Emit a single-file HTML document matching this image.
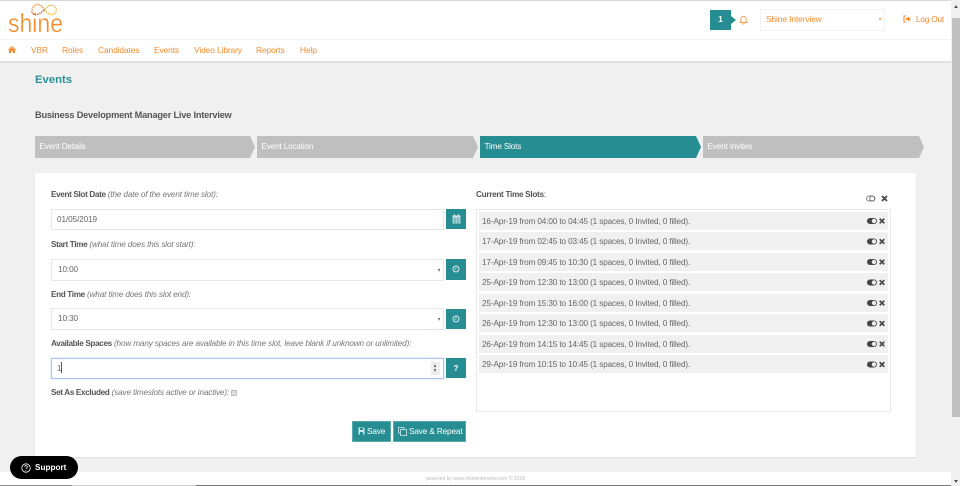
<!DOCTYPE html>
<html><head><meta charset="utf-8"><style>
html,body{margin:0;padding:0}
body{width:960px;height:486px;overflow:hidden;position:relative;background:#f0f0f0;font-family:"Liberation Sans",sans-serif;color:#666}
.a{position:absolute;white-space:nowrap}
.nav{top:45px;font-size:8.4px;letter-spacing:-.1px;line-height:11px;color:#f58a2c}
.step{top:136px;height:22px}
.step span{position:absolute;left:4.500px;top:0;line-height:22px;font-size:8.2px;letter-spacing:-.17px;color:#fff}
.lab{font-size:8.2px;letter-spacing:-.15px;line-height:11px;color:#777;font-style:italic}
.lab b{font-style:normal;color:#555;letter-spacing:-.36px}
.inp{left:51px;width:393px;background:#fff;border:1px solid #e6e6e6;box-sizing:border-box;font-size:8.2px;letter-spacing:-.1px;color:#666}
.tb{left:446px;width:20px;background:#268e93}
.row{left:479px;width:409px;height:18px;background:#f0f0f0;font-size:8.2px;letter-spacing:-.13px;line-height:18px;color:#666}
.row span{position:absolute;left:3px;top:.5px}
.btn{top:421px;height:21px;background:#268e93;color:#fff;font-size:8.2px;letter-spacing:-.12px;line-height:20px;box-sizing:border-box;border:1px solid #5aa9ad}
svg{position:absolute;overflow:visible}
</style></head><body>

<!-- top bar -->
<div class="a" style="left:0;top:0;width:951px;height:62px;background:#fff"></div>
<div class="a" style="left:0;top:0;width:960px;height:1px;background:#d8d8d8"></div>
<div class="a" style="left:0;top:39px;width:951px;height:1px;background:#f2f2f2"></div>
<div class="a" style="left:0;top:61px;width:951px;height:2px;background:#e2e2e2"></div>

<!-- logo -->
<svg style="left:0;top:0" width="80" height="40">
<text x="8" y="32" font-family="Liberation Sans" font-size="26" fill="#f58a2c" stroke="#fff" stroke-width=".35" textLength="55" lengthAdjust="spacingAndGlyphs">shine</text>
<g fill="none" stroke-width="1.500" stroke-dasharray="1.300 1">
<path d="M44 10c-3 3-6 5-9 4.500-2-.3-3.500-2-3-4" stroke="#d9503a"/>
<path d="M32 10c.5-3 3-5.500 6-5.500 3 0 4.500 3 6.500 5.500" stroke="#ef8a3a"/>
<path d="M44.500 10c2 2.500 5 5 8 4.500 3-.5 4.500-3.500 3.500-6-1-2.500-4-4-6.500-3-2 .8-3.500 2.500-5 4.500" stroke="#f4b33a"/>
</g></svg>

<!-- nav -->
<svg style="left:8px;top:46px" width="8" height="7" viewBox="0 0 8 7"><path d="M4 0 0 3.400l.5.600L4 1l3.500 3 .5-.6zM1 4v3h2.200V5h1.600v2H7V4L4 1.500z" fill="#f58a2c"/></svg>
<div class="a nav" style="left:31px">VBR</div>
<div class="a nav" style="left:62px">Roles</div>
<div class="a nav" style="left:98px">Candidates</div>
<div class="a nav" style="left:154px">Events</div>
<div class="a nav" style="left:194px">Video Library</div>
<div class="a nav" style="left:256px">Reports</div>
<div class="a nav" style="left:300px">Help</div>

<!-- top right -->
<div class="a" style="left:710px;top:10px;width:21px;height:20px;background:#268e93;color:#fff;font-size:8.200px;font-weight:bold;line-height:20px;text-align:center">1</div>
<div class="a" style="left:731px;top:16px;border-left:5px solid #268e93;border-top:4px solid transparent;border-bottom:4px solid transparent"></div>
<svg style="left:739px;top:15px" width="9" height="10" viewBox="0 0 9 10"><path d="M1 7.500c1-1 1-2 1-3.500C2 2.500 3 1.200 4.500 1.200S7 2.500 7 4c0 1.500 0 2.500 1 3.500zM3.500 8.500c.3.800 1.700.8 2 0" fill="none" stroke="#f58a2c" stroke-width=".8"/></svg>
<div class="a" style="left:760px;top:9px;width:125px;height:22px;border:1px solid #f2f2f2;box-sizing:border-box;background:#fff"></div>
<div class="a" style="left:766px;top:14px;font-size:8.400px;letter-spacing:-.1px;line-height:11px;color:#f58a2c">Shine Interview</div>
<div class="a" style="left:879px;top:18px;border-top:3px solid #f58a2c;border-left:1.500px solid transparent;border-right:1.500px solid transparent"></div>
<svg style="left:903px;top:15px" width="8" height="8" viewBox="0 0 8 8"><path d="M3 1H1v6h2" fill="none" stroke="#f58a2c"/><path d="M3 3h2V1.500L8 4 5 6.500V5H3z" fill="#f58a2c"/></svg>
<div class="a" style="left:916px;top:13.500px;font-size:8.200px;letter-spacing:-.17px;line-height:11px;color:#f58a2c">Log Out</div>

<!-- headings -->
<div class="a" style="left:35px;top:73px;font-size:11.300px;line-height:14px;font-weight:bold;color:#2d8f94">Events</div>
<div class="a" style="left:35px;top:109px;font-size:9.200px;letter-spacing:-.19px;line-height:12px;font-weight:bold;color:#555">Business Development Manager Live Interview</div>

<!-- steps -->
<div class="a step" style="left:35px;width:220px;background:#bfbfbf;clip-path:polygon(0 0,215px 0,220px 11px,215px 100%,0 100%)"><span>Event Details</span></div>
<div class="a step" style="left:257px;width:221px;background:#bfbfbf;clip-path:polygon(0 0,216px 0,221px 11px,216px 100%,0 100%)"><span>Event Location</span></div>
<div class="a step" style="left:480px;width:221px;background:#268e93;clip-path:polygon(0 0,216px 0,221px 11px,216px 100%,0 100%)"><span>Time Slots</span></div>
<div class="a step" style="left:703px;width:221px;background:#bfbfbf;clip-path:polygon(0 0,216px 0,221px 11px,216px 100%,0 100%)"><span>Event Invites</span></div>

<!-- card -->
<div class="a" style="left:35px;top:173px;width:881px;height:284px;background:#fff;box-shadow:0 1px 1px #ddd"></div>

<div class="a lab" style="left:51px;top:189px"><b>Event Slot Date</b> (the date of the event time slot):</div>
<div class="a inp" style="top:209px;height:21px;line-height:19px;padding-left:5px">01/05/2019</div>
<div class="a tb" style="top:209px;height:20px"></div>
<svg style="left:452px;top:214px" width="9" height="10" viewBox="0 0 9 10"><path d="M.5 1.500h8V9.500h-8z" fill="#cfe6e7"/><path d="M.5 4h8M.5 6h8M.5 8h8M3 4v5.500M6 4v5.500" stroke="#268e93" stroke-width=".6"/><path d="M2.500.5v1.500M6.500.5v1.500" stroke="#fff"/></svg>

<div class="a lab" style="left:51px;top:239px"><b>Start Time</b> (what time does this slot start):</div>
<div class="a inp" style="top:259px;height:22px;line-height:20px;padding-left:6px">10:00</div>
<div class="a" style="left:438px;top:269px;border-top:3px solid #555;border-left:1.500px solid transparent;border-right:1.500px solid transparent"></div>
<div class="a tb" style="top:259px;height:21px"></div>
<svg style="left:452px;top:265px" width="8" height="8" viewBox="0 0 8 8"><circle cx="4" cy="4" r="3" fill="none" stroke="#e4f0f0" stroke-width="1"/><path d="M4 2.300V4.200H2.500" fill="none" stroke="#e4f0f0" stroke-width=".7"/></svg>

<div class="a lab" style="left:51px;top:289px"><b>End Time</b> (what time does this slot end):</div>
<div class="a inp" style="top:308px;height:22px;line-height:20px;padding-left:6px">10:30</div>
<div class="a" style="left:438px;top:318px;border-top:3px solid #555;border-left:1.500px solid transparent;border-right:1.500px solid transparent"></div>
<div class="a tb" style="top:309px;height:20px"></div>
<svg style="left:452px;top:315px" width="8" height="8" viewBox="0 0 8 8"><circle cx="4" cy="4" r="3" fill="none" stroke="#e4f0f0" stroke-width="1"/><path d="M4 2.300V4.200H2.500" fill="none" stroke="#e4f0f0" stroke-width=".7"/></svg>

<div class="a lab" style="left:51px;top:338px"><b>Available Spaces</b> (how many spaces are available in this time slot, leave blank if unknown or unlimited):</div>
<div class="a inp" style="top:358px;height:21px;line-height:19px;padding-left:5px;border-color:#a9c4ee;box-shadow:0 0 2px #c6d8f5">1<span style="display:inline-block;width:1px;height:11px;background:#555;vertical-align:-2px"></span></div>
<div class="a" style="left:431px;top:362px;width:9px;height:13px;background:#eee"></div>
<div class="a" style="left:434px;top:364px;border-bottom:3px solid #444;border-left:1.500px solid transparent;border-right:1.500px solid transparent"></div>
<div class="a" style="left:434px;top:369px;border-top:3px solid #444;border-left:1.500px solid transparent;border-right:1.500px solid transparent"></div>
<div class="a tb" style="top:358px;height:20px;color:#fff;font-size:8px;font-weight:bold;line-height:21px;text-align:center">?</div>

<div class="a lab" style="left:51px;top:387px"><b>Set As Excluded</b> (save timeslots active or inactive):</div>
<div class="a" style="left:231px;top:390px;width:6px;height:6px;box-sizing:border-box;background:#ddd;border:.5px solid #bbb;border-radius:1px"></div>

<div class="a btn" style="left:352px;width:39px;padding-left:14px">Save</div>
<svg style="left:358px;top:427px" width="7" height="8" viewBox="0 0 7 8"><path d="M.5 .5h5l1 1v6h-6z" fill="#cfe6e7"/><path d="M2 1v2h3V1M2 5h3v2.500H2z" fill="#268e93"/></svg>
<div class="a btn" style="left:393px;width:73px;padding-left:15px">Save &amp; Repeat</div>
<svg style="left:398px;top:427px" width="9" height="9" viewBox="0 0 9 9"><path d="M.5 .5h5.500v5.500H.5z" fill="none" stroke="#d6eaeb" stroke-width=".8"/><path d="M2.500 2.500H8.500V8.500H2.500z" fill="#268e93" stroke="#d6eaeb" stroke-width=".8"/></svg>

<!-- right column -->
<div class="a" style="left:476px;top:189px;font-size:8.200px;letter-spacing:-.3px;line-height:11px;color:#555"><b>Current Time Slots</b>:</div>
<svg style="left:866px;top:195px" width="10" height="7" viewBox="0 0 10 7"><rect x=".5" y="1" width="8.500" height="5" rx="2.500" fill="none" stroke="#555" stroke-width=".7"/><circle cx="6.300" cy="3.500" r="2.500" fill="none" stroke="#555" stroke-width=".7"/></svg>
<svg style="left:881px;top:195px" width="7" height="7" viewBox="0 0 7 7"><path d="M1 1l5 5M6 1l-5 5" stroke="#444" stroke-width="1.700"/></svg>
<div class="a" style="left:476px;top:209px;width:415px;height:203px;border:1px solid #e8e8e8;box-sizing:border-box;background:#fff"></div>

<div class="a row" style="top:212px"><span>16-Apr-19 from 04:00 to 04:45 (1 spaces, 0 Invited, 0 filled).</span></div>
<div class="a row" style="top:232px"><span>17-Apr-19 from 02:45 to 03:45 (1 spaces, 0 Invited, 0 filled).</span></div>
<div class="a row" style="top:253px"><span>17-Apr-19 from 09:45 to 10:30 (1 spaces, 0 Invited, 0 filled).</span></div>
<div class="a row" style="top:273px"><span>25-Apr-19 from 12:30 to 13:00 (1 spaces, 0 Invited, 0 filled).</span></div>
<div class="a row" style="top:294px"><span>25-Apr-19 from 15:30 to 16:00 (1 spaces, 0 Invited, 0 filled).</span></div>
<div class="a row" style="top:314px"><span>26-Apr-19 from 12:30 to 13:00 (1 spaces, 0 Invited, 0 filled).</span></div>
<div class="a row" style="top:335px"><span>26-Apr-19 from 14:15 to 14:45 (1 spaces, 0 Invited, 0 filled).</span></div>
<div class="a row" style="top:355px"><span>29-Apr-19 from 10:15 to 10:45 (1 spaces, 0 Invited, 0 filled).</span></div>

<svg style="left:867px;top:213px" width="20" height="170" viewBox="0 0 20 170">
<defs><g id="ic"><rect x="0" y="5" width="10" height="6" rx="3" fill="#444"/><circle cx="7" cy="8" r="2.200" fill="#eee"/><path d="M12.700 5.700l4.600 4.600M17.300 5.700l-4.600 4.600" stroke="#444" stroke-width="1.700"/></g></defs>
<use href="#ic" y="0"/><use href="#ic" y="20.500"/><use href="#ic" y="41"/><use href="#ic" y="61.500"/><use href="#ic" y="82"/><use href="#ic" y="102.500"/><use href="#ic" y="123"/><use href="#ic" y="143.500"/>
</svg>

<!-- footer -->
<div class="a" style="left:0;top:472px;width:951px;height:13px;background:#fff"></div>
<div class="a" style="left:426px;top:475px;font-size:5px;line-height:8px;color:#bbb">powered by www.shineinterview.com © 2019</div>
<div class="a" style="left:0;top:485px;width:72px;height:1px;background:#888"></div>
<div class="a" style="left:72px;top:485px;width:124px;height:1px;background:#ccc"></div>
<div class="a" style="left:196px;top:485px;width:755px;height:1px;background:#777"></div>

<!-- support -->
<div class="a" style="left:10px;top:456px;width:68px;height:23px;background:#000;border-radius:12px"></div>
<svg style="left:21px;top:463px" width="10" height="10" viewBox="0 0 10 10"><circle cx="5" cy="5" r="4.200" fill="none" stroke="#fff" stroke-width=".8"/><path d="M3.700 3.900c0-1.700 2.700-1.700 2.700 0 0 1-1.400 1-1.400 2.100M5 7v.8" fill="none" stroke="#fff" stroke-width=".8"/></svg>
<div class="a" style="left:35px;top:462px;font-size:8.200px;line-height:11px;font-weight:bold;color:#fff">Support</div>

<!-- scrollbar -->
<div class="a" style="left:951px;top:0;width:9px;height:486px;background:#f1f1f1"></div>
<div class="a" style="left:952px;top:18px;width:8px;height:399px;background:#c0c0c0"></div>
<div class="a" style="left:954px;top:5px;border-bottom:3px solid #555;border-left:2px solid transparent;border-right:2px solid transparent"></div>
<div class="a" style="left:954px;top:480px;border-top:3px solid #555;border-left:2px solid transparent;border-right:2px solid transparent"></div>

</body></html>
